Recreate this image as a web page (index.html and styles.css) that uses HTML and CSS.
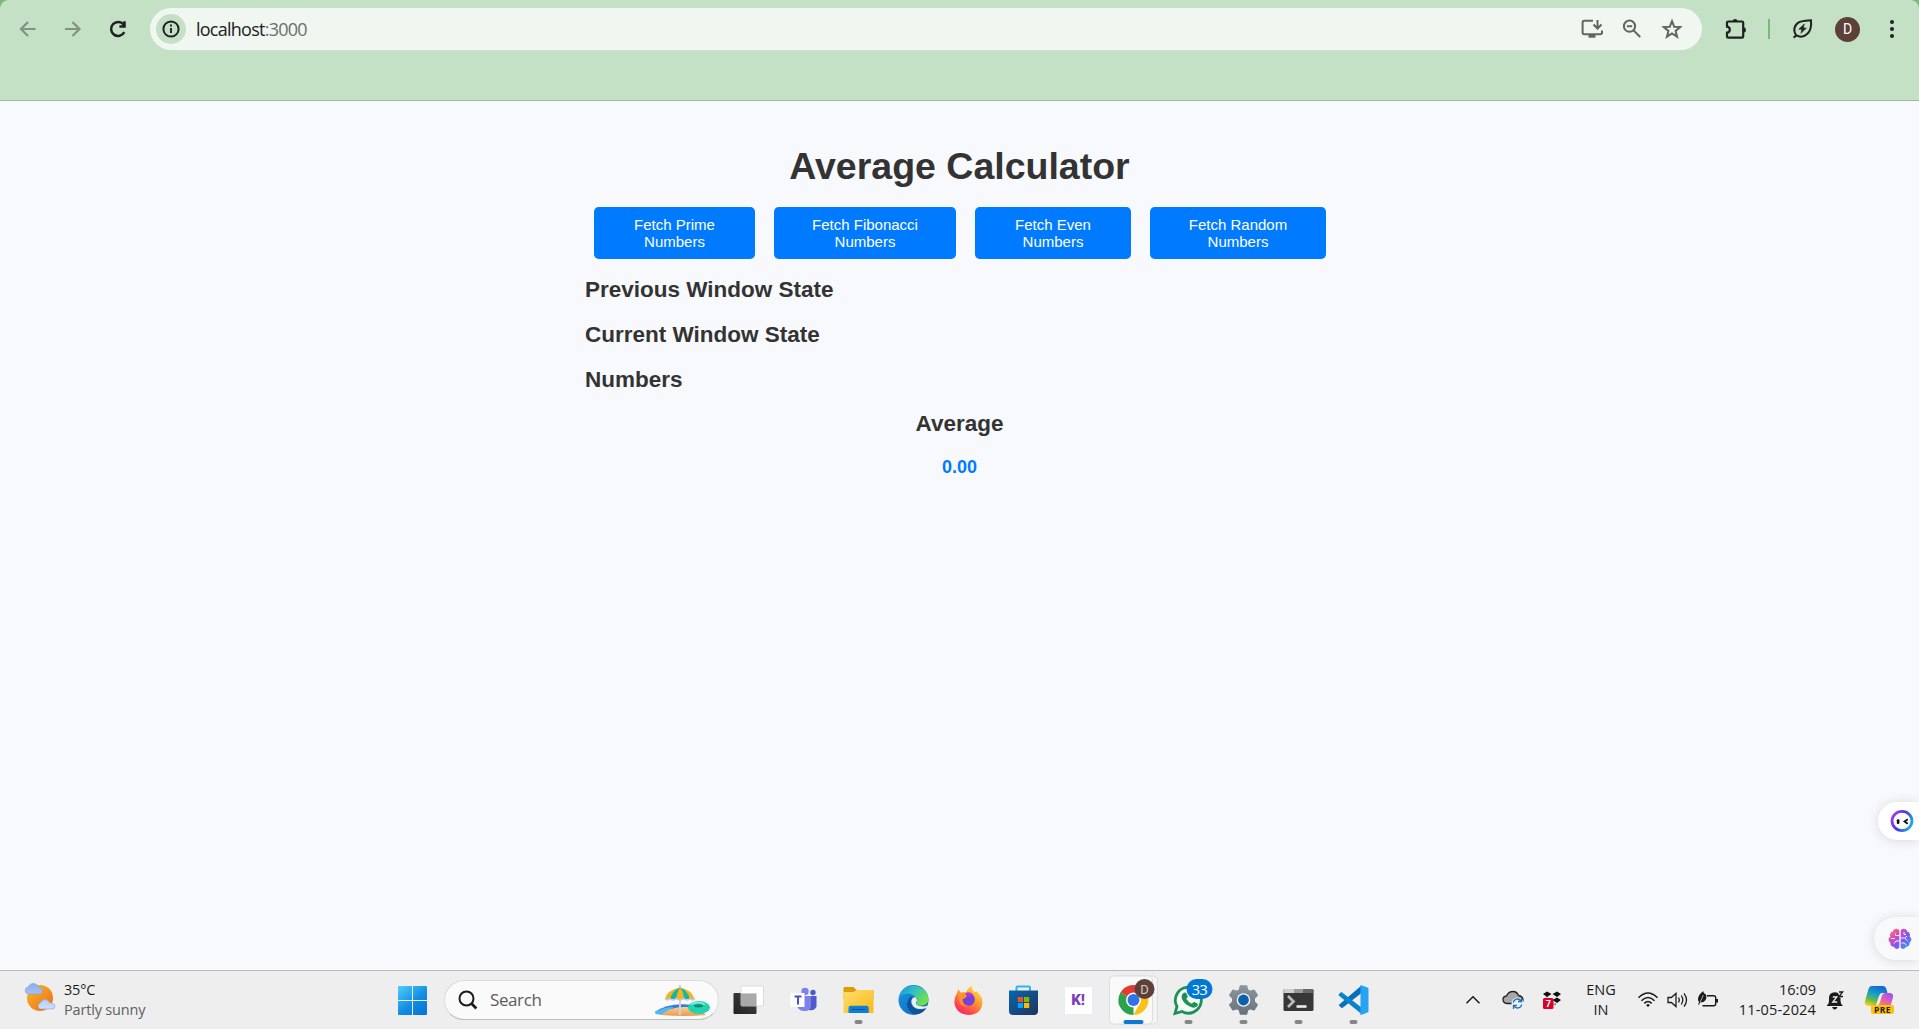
FILE: index.html
```html
<!DOCTYPE html>
<html lang="en">
<head>
<meta charset="utf-8">
<title>Average Calculator</title>
<link rel="stylesheet" href="styles.css">
</head>
<body>
<div class="screen">
  <header class="browser">
    <div class="toolbar">
      <svg class="nav-icon nav-dim" viewBox="0 0 24 24"><path d="M19.5 12H5M12 5l-7 7 7 7"/></svg>
      <svg class="nav-icon nav-dim" viewBox="0 0 24 24"><path d="M4 12H18.500M11.500 5l7 7-7 7"/></svg>
      <svg class="nav-icon nav-reload" viewBox="0 0 24 24"><path d="M18.3 15.2A7 7 0 1 1 17.6 7.6L19 9.3M18.500 4.3V9.400H13.4"/></svg>
      <div class="address">
        <span class="site-info"><svg width="20" height="20" viewBox="0 0 20 20"><circle cx="10" cy="10" r="7.6" fill="none" stroke="#202124" stroke-width="2"/><path d="M10 9v5M10 5.6v2" stroke="#202124" stroke-width="1.9"/></svg></span>
        <span class="url">localhost<span class="port">:3000</span></span>
        <div class="address-actions">
          <svg width="22" height="22" viewBox="0 0 22 22"><path d="M12 2.7H3.3Q1.6 2.7 1.6 4.4v10.2q0 1.7 1.7 1.7h16q1.7 0 1.7-1.7v-2.2" /><path d="M16.5 2v8M12.5 6.5l4 4 4-4"/><path d="M7.5 17v2.7h7V17z" class="solid"/></svg>
          <svg width="22" height="22" viewBox="0 0 22 22"><circle cx="8.5" cy="8.2" r="5.6"/><path d="M12.6 12.4l6.6 6.6M5.8 8.2h5.4"/></svg>
          <svg width="22" height="22" viewBox="0 0 22 22"><path d="M11 3.2l2.2 5.5 6 .4-4.6 3.8 1.5 5.8-5.1-3.2-5.1 3.2 1.5-5.8-4.6-3.8 6-.4z"/></svg>
        </div>
      </div>
      <svg class="ext" width="24" height="24" viewBox="0 0 24 24"><path d="M4.3 4.5h13.6q1.3 0 1.3 1.3v13.6q0 1.3-1.3 1.3H4.3Q3 20.700 3 19.400v-3.700q2.800-.400 2.800-3t-2.800-3V5.800Q3 4.500 4.300 4.500z" fill="none" stroke="#202124" stroke-width="2.200"/><path d="M8.600 4.500a2.500 2.500 0 0 1 5 0zM19.200 10.200a2.700 2.700 0 0 1 0 5.400z" fill="#202124"/></svg>
      <span class="separator"></span>
      <svg class="leaf" width="22" height="22" viewBox="0 0 22 22" fill="none" stroke="#202124" stroke-width="2"><path d="M4.300 17.400C.800 12.500 2 7 7.200 4.200 10.500 2.400 14.500 2.600 19 2.300c.500 5.500-.300 10.300-3.600 13.500-3.300 3.200-7.500 3.500-11.100 1.600zM4.800 17l-3.200 2.600"/><path d="M12.300 6L6.800 11.200h3.100L8.900 15.300l5.500-5.200h-3.100z" fill="#202124" stroke-width=".6"/></svg>
      <span class="profile">D</span>
      <svg class="kebab" width="6" height="20" viewBox="0 0 6 20" fill="#202124"><circle cx="3" cy="3" r="2"/><circle cx="3" cy="10" r="2"/><circle cx="3" cy="17" r="2"/></svg>
    </div>
  </header>

  <main class="page">
    <div class="calculator">
      <h1>Average Calculator</h1>
      <div class="buttons">
        <button class="btn-prime">Fetch Prime<br>Numbers</button>
        <button class="btn-fibo">Fetch Fibonacci<br>Numbers</button>
        <button class="btn-even">Fetch Even<br>Numbers</button>
        <button class="btn-random">Fetch Random<br>Numbers</button>
      </div>
      <h2>Previous Window State</h2>
      <h2>Current Window State</h2>
      <h2>Numbers</h2>
      <h2 class="average-title">Average</h2>
      <p class="average">0.00</p>
    </div>
    <div class="float float-bot">
      <svg width="24" height="24" viewBox="0 0 24 24"><defs><linearGradient id="ring" x1="0" y1=".3" x2="1" y2=".8"><stop offset="0" stop-color="#a03ce0"/><stop offset=".45" stop-color="#4a34e8"/><stop offset="1" stop-color="#18b8e4"/></linearGradient></defs><ellipse cx="12" cy="12" rx="10" ry="9.600" fill="#fff" stroke="url(#ring)" stroke-width="2.800"/><rect x="6.800" y="10.300" width="2.600" height="4.600" rx="1" fill="#111"/><path d="M17.800 10.300l-3.200 2.200 3.200 2.200" fill="none" stroke="#111" stroke-width="1.900"/></svg>
    </div>
    <div class="float float-brain">
      <svg width="24" height="22" viewBox="0 0 24 22"><defs><linearGradient id="brain" x1="0" y1="0" x2="1" y2="1"><stop offset="0" stop-color="#ff9a3c"/><stop offset=".3" stop-color="#e348b8"/><stop offset=".6" stop-color="#7c58f0"/><stop offset="1" stop-color="#28b4f8"/></linearGradient></defs><path d="M11.300 2.500C10 0 5.500 0 4.800 3.500 2 4 1.500 7 2.500 8.500 0 10 0 13 2.300 14.500 2 17.500 4 19 6 18.700 7.500 21.800 10.500 21.300 11.300 19.500zM12.700 2.500C14 0 18.500 0 19.200 3.500 22 4 22.500 7 21.500 8.500 24 10 24 13 21.700 14.500 22 17.500 20 19 18 18.700 16.500 21.800 13.500 21.300 12.700 19.500z" fill="url(#brain)"/><path d="M11.500 7.500H7.500V5.500M11.500 13H8l-2 2.500M3 10.500h4M13 10h4l2-2M13.500 15h3l1.500 2M16 4v2.500l2 0M17 10.500l2.500 2" fill="none" stroke="#fff" stroke-width=".9"/></svg>
    </div>
  </main>

  <footer class="taskbar">
    <div class="weather">
      <svg width="32" height="32" viewBox="0 0 32 32"><defs><linearGradient id="sun" x1="0" y1="0" x2="1" y2="1"><stop offset="0" stop-color="#f6b92d"/><stop offset="1" stop-color="#f06a12"/></linearGradient><linearGradient id="cloud" x1="0" y1="0" x2="0" y2="1"><stop offset="0" stop-color="#8aaeea"/><stop offset="1" stop-color="#cfdff8"/></linearGradient></defs><circle cx="16" cy="16" r="13" fill="url(#sun)"/><path d="M4 12a3.600 3.600 0 0 1 0-7Q6 1 10 1.500q3.500.500 4.300 3.500Q18 5 18.300 8.500 18.300 12 15 12zM16.500 27a3.200 3.200 0 0 1 0-6.200q1.500-3.600 5-3.200 3.200.300 4 3.200 5 .200 5.300 3.400 0 2.800-3 2.800z" fill="url(#cloud)" stroke="#86a8df" stroke-width=".7"/></svg>
      <div class="weather-text"><span>35°C</span><span class="muted">Partly sunny</span></div>
    </div>
    <svg class="start" width="29" height="29" viewBox="0 0 29 29"><defs><linearGradient id="win" gradientUnits="userSpaceOnUse" x1="0" y1="0" x2="24" y2="29"><stop offset="0" stop-color="#50cdfa"/><stop offset=".6" stop-color="#128ce2"/><stop offset="1" stop-color="#0677d6"/></linearGradient></defs><path d="M1 0h13v14H0V1Q0 0 1 0zM15 0h13q1 0 1 1v13H15zM0 15h14v14H1q-1 0-1-1zM15 15h14v13q0 1-1 1H15z" fill="url(#win)"/></svg>
    <div class="search">
      <svg width="20" height="20" viewBox="0 0 20 20" fill="none" stroke="#1b1b1b"><circle cx="8.500" cy="8.500" r="7" stroke-width="2"/><path d="M13.500 13.500l4.800 5" stroke-width="2.600"/></svg>
      <span>Search</span>
      <svg class="beach" width="56" height="33" viewBox="0 0 56 33"><defs><linearGradient id="sand" x1="0" y1="0" x2="0" y2="1"><stop offset="0" stop-color="#fbd18c"/><stop offset="1" stop-color="#e99a50"/></linearGradient></defs><path d="M1 28Q15 18 38 21v4L8 30 2 30z" fill="#2c7fe0"/><path d="M1 28Q10 23 20 23L8 31 2 30z" fill="#52b8f0"/><path d="M7 31Q17 22 33 23q14 2 19 8-22 2-45 0z" fill="url(#sand)"/><path d="M25 1h2v30h-2z" fill="#d9cbe0"/><path d="M11 15Q13 6 26 3.500 38 6 40.500 15z" fill="#f0b51f"/><path d="M16 15Q18 7 26 3.500 23 8 22 15zM30 15Q29.500 7 26 3.500 34 7 36 15z" fill="#14b8a0"/><path d="M11 14.500q2.500 3 5 0 3 3 6 0 4 3 8 0 3 3 6 0 2.500 3 5 0" fill="none" stroke="#c9c0e8" stroke-width="1.500"/><ellipse cx="45" cy="23.500" rx="11" ry="6.500" fill="#22d3ae"/><ellipse cx="44.500" cy="21.800" rx="4.500" ry="1.600" fill="#128a78"/><path d="M37 20.500q7-4 14 0" stroke="#86f2dc" stroke-width="1.400" fill="none"/></svg>
    </div>
    <nav class="apps">
      <svg class="app" viewBox="0 0 55 58"><defs><linearGradient id="tv" x1="0" y1="1" x2="1" y2="0"><stop offset="0" stop-color="#222"/><stop offset="1" stop-color="#444"/></linearGradient></defs><rect x="12.500" y="22" width="23" height="21" rx="1" fill="url(#tv)"/><rect x="20" y="15" width="22.500" height="20" rx="1" fill="#fff" fill-opacity=".92" stroke="#d4d4d4" stroke-width=".8"/><path d="M20 22.500h15.500V35H20z" fill="#a9a9a9"/></svg>
      <svg class="app" viewBox="0 0 55 58"><circle cx="29" cy="20.500" r="3.700" fill="#7b83eb"/><circle cx="37" cy="21.500" r="2.700" fill="#5059c9"/><path d="M33 25h7.500v10.500Q39 40 33 39z" fill="#5059c9"/><path d="M21 25h14v9q0 6-6.500 6T21 34z" fill="#7b83eb"/><rect x="14.500" y="22" width="14" height="14" fill="#fff"/><path d="M18.500 25.500h7M22 25.500V33.500" stroke="#4b53bc" stroke-width="2"/></svg>
      <svg class="app" viewBox="0 0 55 58"><defs><linearGradient id="folder" x1="0" y1="0" x2="1" y2="1"><stop offset="0" stop-color="#ffdd70"/><stop offset="1" stop-color="#f9bb16"/></linearGradient></defs><path d="M12.500 17q0-1 1-1h9l3 3H42q.500 0 .500 1v8h-30z" fill="#dd9d05"/><path d="M12.500 21h10l3-2H41q1.500 0 1.500 1v22h-30z" fill="url(#folder)"/><path d="M17.500 42v-5q0-2.200 2.200-2.200H35.500q2.200 0 2.200 2.200v5z" fill="#0d7fd5"/><path d="M21 38.500h13" stroke="#0a4f92" stroke-width="1"/><rect class="run-dot" x="23.500" y="49" width="8" height="4" rx="2"/></svg>
      <svg class="app" viewBox="0 0 55 58"><defs><linearGradient id="edge1" x1="0" y1="0" x2="1" y2=".5"><stop offset="0" stop-color="#1594d8"/><stop offset=".5" stop-color="#30bfc7"/><stop offset="1" stop-color="#70e04a"/></linearGradient><linearGradient id="edge2" x1="0" y1="0" x2="1" y2="1"><stop offset="0" stop-color="#1598e6"/><stop offset="1" stop-color="#0f62b5"/></linearGradient></defs><circle cx="27.500" cy="29" r="15" fill="url(#edge2)"/><path d="M12.700 27.500A15 15 0 0 1 42.500 28.500Q42 34.500 35 34.500 30 34.500 30 32.500 31.500 31 31 28 29 23.500 22.500 22.500 16 22.500 12.700 27.500z" fill="url(#edge1)"/><path d="M24.500 25.500Q18.500 33 23 39q4 5.500 10 3.800Q38 41 40.200 37.300 32 41 27 36q-4-5-.500-9z" fill="#10519b"/><path d="M29.500 26q-5 1-4 6 2 6 9 6 3.500 0 6.500-1.500l1-2q-4 1.500-8 .5-5-1-4-3.500 2-2-.5-5.500z" fill="#eee"/></svg>
      <svg class="app" viewBox="0 0 55 58"><defs><linearGradient id="fox" x1=".8" y1="0" x2=".2" y2="1"><stop offset="0" stop-color="#ffe840"/><stop offset=".45" stop-color="#ff9530"/><stop offset=".8" stop-color="#ff4050"/><stop offset="1" stop-color="#e52286"/></linearGradient></defs><path d="M31 14.500Q30 17 33 20.500q2 1.500 2-.5 6.500 4.500 6.500 11.500-1 12-14 12.500-13-1-14.200-13 .2-5.500 3.200-10l.500-3 3 4q3-1.500 5-.5 2-5 6-7z" fill="url(#fox)"/><circle cx="27.500" cy="28.500" r="6.300" fill="#7542d8"/><path d="M18 22q5-1 8 2.500-1 3-4.500 3.500 0 6 6 7-7 1-9.500-4.500z" fill="#ff9228"/><path d="M24 22.500q5-3 8.500 1.500-3-.5-4 2z" fill="#b833dc"/></svg>
      <svg class="app" viewBox="0 0 55 58"><defs><linearGradient id="store" x1="0" y1="0" x2="1" y2="1"><stop offset="0" stop-color="#0866b2"/><stop offset="1" stop-color="#203459"/></linearGradient></defs><path d="M20.500 21v-4.500q0-1 1-1h11.500q1 0 1 1V21" fill="none" stroke="#28b8ef" stroke-width="2"/><path d="M13 19.500h29V40q0 4-4 4H17q-4 0-4-4z" fill="url(#store)"/><path d="M21.800 26h5.200v5h-5.200z" fill="#f25022"/><path d="M28 26h5.200v5H28z" fill="#7fba00"/><path d="M21.800 32h5.200v5h-5.200z" fill="#00a4ef"/><path d="M28 32h5.200v5H28z" fill="#ffb900"/></svg>
      <div class="app kahoot"><span>K!</span></div>
      <svg class="app" viewBox="0 0 55 58"><rect x="7" y="5" width="44.500" height="48" rx="4" fill="#f4f4f4" stroke="#dedede"/><rect x="3.500" y="5" width="43" height="48" rx="4" fill="#f9f9f9" stroke="#dedede"/><path d="M27.500 29L14.500 21.500A15 15 0 0 1 40.500 21.500z" fill="#e33b2e"/><path d="M27.500 29V44A15 15 0 0 1 14.500 21.500z" fill="#2da14b"/><path d="M27.500 22H40.700A15 15 0 0 1 27.500 44L33.600 32.500z" fill="#fbc116"/><path d="M14.500 21.500l7 11 6 3.500-3 7.500q-8-2-12-11z" fill="#2da14b"/><circle cx="27.500" cy="29" r="7.500" fill="#fff"/><circle cx="27.500" cy="29" r="6" fill="#2f73e8"/><circle cx="38.500" cy="18" r="10" fill="#5d4037"/><text x="38.500" y="22.800" class="chrome-letter">D</text><rect x="17.500" y="49" width="20" height="4" rx="2" fill="#0b78d4"/></svg>
      <svg class="app" viewBox="0 0 55 58"><path d="M14 42.500l2-7A13 13 0 1 1 21 40.500z" fill="#f5faf6" stroke="#1c9153" stroke-width="2.800"/><path d="M22 22.500q2-2 3.500 0l1.300 3q0 1-1.500 2.300 2 3.700 5.500 5 1.700-2.200 2.700-1.800l3 1.500q1.200 1-.5 3-2.500 2-6 .5-6.500-2.500-9-8-1.200-3.500 1-5.500z" fill="#1c9153"/><rect x="25.500" y="8" width="26" height="20" rx="10" fill="#0078d4"/><text x="38.500" y="23.500" class="badge-text">33</text><rect class="run-dot" x="23.500" y="49" width="8" height="4" rx="2"/></svg>
      <svg class="app" viewBox="0 0 55 58"><defs><linearGradient id="gear" x1="0" y1="0" x2="0" y2="1"><stop offset="0" stop-color="#8c949c"/><stop offset="1" stop-color="#69737d"/></linearGradient></defs><path d="M24.500 15h6l1 4 2.500 1.400 4-1.200 3.200 5-3 3v3.600l3 3-3.200 5-4-1.200-2.500 1.400-1 4h-6l-1-4-2.500-1.400-4 1.200-3.200-5 3-3v-3.600l-3-3 3.200-5 4 1.200 2.500-1.400z" fill="url(#gear)" stroke="url(#gear)" stroke-width="1.500" stroke-linejoin="round"/><circle cx="27.500" cy="29" r="6.800" fill="#f4f4f4"/><circle cx="27.500" cy="29" r="5.400" fill="#0c60ae"/><rect class="run-dot" x="23.500" y="49" width="8" height="4" rx="2"/></svg>
      <svg class="app" viewBox="0 0 55 58"><rect x="12.500" y="18" width="30" height="22" rx="1.500" fill="#373737"/><path d="M12.500 22v-2.500q0-1.500 1.500-1.500h9v4z" fill="#cfcfcf"/><path d="M23 18h9v4h-9z" fill="#9b9b9b"/><path d="M32 18h9q1.500 0 1.500 1.500V22H32z" fill="#686868"/><path d="M17 25l5.500 5.500L17 36" fill="none" stroke="#bcbcbc" stroke-width="2.700"/><path d="M25.500 35.500h10" stroke="#eee" stroke-width="2.600"/><rect class="run-dot" x="23.500" y="49" width="8" height="4" rx="2"/></svg>
      <svg class="app" viewBox="0 0 55 58"><path d="M14 35.500l2 1.700L35.500 22v-7.500L12.700 34z" fill="#0870bb"/><path d="M12.700 24.500Q12.300 23 14 22l1.500-1 20 15.500V43z" fill="#0b83cc"/><path d="M34.500 14l7 2.500q1 .500 1 1.500v22q0 1-1 1.500l-7 2.800z" fill="#27a3f2"/><rect class="run-dot" x="23.500" y="49" width="8" height="4" rx="2"/></svg>
    </nav>
    <div class="tray">
      <svg class="chevron" width="16" height="12" viewBox="0 0 16 12"><path d="M1.500 9.200L8 2.700l6.500 6.500" fill="none" stroke="#1b1b1b" stroke-width="1.500"/></svg>
      <svg class="onedrive" width="22" height="20" viewBox="0 0 22 20"><path d="M5 13.500Q1 13 1 9.500 1 6.500 4.500 6 6.500 1.500 11 1.500q4 0 5.500 4 4 .5 4.500 4 0 4-4 4z" fill="#a8a8a8" stroke="#222" stroke-width="1.300"/><circle cx="15.500" cy="13.500" r="6" fill="#eee"/><path d="M11.300 12.500a4.200 4.200 0 0 1 7.700-1.500M19.700 14.500A4.200 4.200 0 0 1 12 16M19.500 8v3.500H16M11.500 19v-3.500H15" fill="none" stroke="#1673c4" stroke-width="1.300"/></svg>
      <svg class="dropbox" width="20" height="20" viewBox="0 0 20 20"><path d="M1 4l4-2.500L9.500 4 5 7zM10.500 4L15 1.500 19 4l-4 3zM10.500 10L15 7.500 19 10l-4 3zM1 10l4-2.500L9.500 10 5 13z" fill="#111"/><path d="M10.500 14l3.500-1v2.500z" fill="#888"/><rect x="1" y="8" width="10.500" height="11" rx="1.500" fill="#d6042d"/><text x="6.300" y="16.700" class="tray-badge">7</text></svg>
      <div class="lang"><span>ENG</span><span>IN</span></div>
      <svg class="wifi" width="22" height="18" viewBox="0 0 22 18" fill="none" stroke="#1b1b1b" stroke-width="1.500"><path d="M1.500 6.800q9.500-9.600 19 0M4.400 9.800q6.600-6.700 13.200 0M7.300 12.400q3.700-3.700 7.400 0"/><circle cx="11" cy="14.300" r="1.400" fill="#1b1b1b" stroke="none"/></svg>
      <svg class="volume" width="22" height="18" viewBox="0 0 22 18" fill="none" stroke="#1b1b1b" stroke-width="1.300"><path d="M1 6.500h3.300L9 2.500v13L4.300 11.500H1z"/><path d="M11.500 6.500q1.500 2.500 0 5M14.300 4.500q3 4.500 0 9M17 2.300q5 6.700 0 13.400"/></svg>
      <svg class="battery" width="22" height="18" viewBox="0 0 22 18"><path d="M10 4.700h6.700q2 0 2 2v6q0 2-2 2H5.500" fill="none" stroke="#1b1b1b" stroke-width="1.400"/><path d="M19 8h2v3.500h-2z" fill="#1b1b1b"/><path d="M1 8Q1.500 3 6.500 0 6 2 9 3.500q1.500 5-2.500 7.500L3 11.500 2 14 1.200 13.500 2 11Q.800 10 1 8z" fill="#1b1b1b"/><path d="M3 11q2-3 3.200-7" stroke="#eee" stroke-width=".7" fill="none"/></svg>
      <div class="clock"><span>16:09</span><span class="date">11-05-2024</span></div>
      <svg class="bell" width="18" height="22" viewBox="0 0 18 22"><path d="M1 16q2-1 2-4V9q0-5.500 6-5.700 5.500.2 5.500 5.700v3q0 3 2 4v1H1z" fill="#1b1b1b"/><path d="M6 18h5.500q-1 2.500-2.750 2.500T6 18z" fill="#1b1b1b"/><path d="M11.500 1h6v7.500h-4z" fill="#eee"/><path d="M13 3h3.600l-3.600 4.500h4" stroke="#1b1b1b" stroke-width="1.300" fill="none"/><path d="M6.800 8h4l-4 5h4.400" stroke="#eee" stroke-width="1.300" fill="none"/></svg>
      <svg class="copilot" width="32" height="30" viewBox="0 0 32 30"><defs><linearGradient id="cp1" x1=".6" y1="0" x2=".2" y2="1"><stop offset="0" stop-color="#1268d6"/><stop offset=".4" stop-color="#16a0c4"/><stop offset=".7" stop-color="#62bb4c"/><stop offset="1" stop-color="#ffcf18"/></linearGradient><linearGradient id="cp2" x1=".9" y1="0" x2=".2" y2="1"><stop offset="0" stop-color="#9354ec"/><stop offset=".5" stop-color="#dc5bc0"/><stop offset="1" stop-color="#ff8a3c"/></linearGradient></defs><path d="M8 1h11q2.500 0 3.200 2.500L23.500 8H18q-2 0-3 3L12 20q-.5 1-2 1H4q-4-.5-3-5L4.500 4Q5.500 1 8 1z" fill="url(#cp1)"/><path d="M21 8h5q4 .5 3 4.500L26.500 21H13q2-.5 3-4l2-6.500Q19 8 21 8z" fill="url(#cp2)"/><rect x="7" y="20" width="23" height="9" rx="2" fill="#ffc20a"/><text x="18.500" y="27.500" class="pre-text">PRE</text></svg>
    </div>
  </footer>
</div>
</body>
</html>
```
FILE: styles.css
```css
* { box-sizing: border-box; }

body {
  margin: 0;
  font-family: "Liberation Sans", Arial, sans-serif;
  color: #333;
}

svg { flex: none; display: block; }

.screen {
  display: flex;
  flex-direction: column;
  height: 1029px;
  overflow: hidden;
}

/* Browser toolbar */
.browser {
  flex: none;
  height: 101px;
  padding-top: 8px;
  background: #c5e1c5;
  border-bottom: 1px solid #9cbb9c;
  position: relative;
}

.browser::before {
  content: "";
  position: absolute;
  inset: 0;
  background:
    radial-gradient(circle at 9px 9px, transparent 8.5px, #77bb79 9.5px) 0 0 / 9px 9px no-repeat,
    radial-gradient(circle at 0 9px, transparent 8.5px, #77bb79 9.5px) 100% 0 / 9px 9px no-repeat;
}

.toolbar {
  display: flex;
  align-items: center;
  height: 42px;
  padding-left: 16px;
}

.nav-icon {
  width: 24px;
  height: 24px;
  fill: none;
  stroke: #202124;
  stroke-width: 2.5;
  margin-right: 21px;
}

.nav-dim { stroke: #809480; stroke-width: 2.2; }
.nav-reload { margin: 0 20px 0 0; }

.address {
  display: flex;
  align-items: center;
  width: 1552px;
  height: 42px;
  padding: 0 19px 0 6px;
  border-radius: 21px;
  background: #f0f7f0;
}

.site-info {
  display: flex;
  align-items: center;
  justify-content: center;
  width: 30px;
  height: 30px;
  border-radius: 50%;
  background: #c5e1c5;
}

.url {
  margin-left: 10px;
  font: 18px/24px "Open Sans", "Noto Sans", sans-serif;
  letter-spacing: -0.75px;
  color: #202124;
}

.port { color: #6b706b; }

.address-actions {
  display: flex;
  gap: 18px;
  margin-left: auto;
  fill: none;
  stroke: #5f6661;
  stroke-width: 2;
}

.address-actions .solid { fill: #5f6661; stroke: none; }

.ext { margin-left: 22px; }

.separator {
  width: 2px;
  height: 20px;
  margin-left: 20px;
  background: #77bb79;
}

.leaf { margin-left: 22px; }

.profile {
  width: 25px;
  height: 25px;
  margin-left: 21px;
  border-radius: 50%;
  background: #5d4037;
  color: #fff;
  font: 14px/25px Roboto, sans-serif;
  text-align: center;
}

.kebab { margin-left: 29px; }

/* Calculator page */
.page {
  flex: 1;
  position: relative;
  background: #f8f9fc;
}

.calculator {
  width: 749px;
  margin: 0 auto;
  padding-top: 44px;
}

h1 {
  margin: 0;
  font-size: 37.5px;
  line-height: 43px;
  text-align: center;
}

.buttons {
  display: flex;
  gap: 19px;
  margin: 19px 8px 18px 9px;
}

button {
  height: 52px;
  padding: 0;
  border: 0;
  border-radius: 4.7px;
  background: #007bff;
  color: #fff;
  font: 15px/17px "Liberation Sans", Arial, sans-serif;
}

.btn-prime { flex: 161 1 0; }
.btn-fibo { flex: 182 1 0; }
.btn-even { flex: 156 1 0; }
.btn-random { flex: 176 1 0; }

h2 {
  margin: 0 0 19px;
  font-size: 22.5px;
  line-height: 26px;
}

.average-title { margin-top: -1px; margin-bottom: 20px; text-align: center; }

.average {
  margin: 0;
  font-size: 18px;
  line-height: 21px;
  font-weight: bold;
  text-align: center;
  color: #007bff;
}

/* Floating side widgets */
.float {
  position: absolute;
  right: 0;
  display: flex;
  align-items: center;
  border-radius: 22px 0 0 22px;
  box-shadow: 0 1px 12px rgba(0, 0, 0, .13);
}

.float-bot {
  top: 701px;
  width: 41px;
  height: 38px;
  padding-left: 11.5px;
  background: #fff;
}

.float-brain {
  top: 816px;
  width: 45px;
  height: 43px;
  padding-left: 13.5px;
  background: #f8f9fa;
}

/* Taskbar */
.taskbar {
  flex: none;
  display: flex;
  align-items: center;
  height: 59px;
  border-top: 1px solid #b9babd;
  background: #eee;
  color: #1b1b1b;
  font: 14.5px/20px "Open Sans", "Noto Sans", sans-serif;
}

.weather {
  display: flex;
  align-items: center;
  width: 398px;
  padding-left: 24px;
  gap: 8px;
}

.weather svg { margin-bottom: 4px; }
.weather-text { display: flex; flex-direction: column; letter-spacing: -0.18px; }
.muted { color: #606060; }

.start { margin-top: 1px; }

.search {
  display: flex;
  align-items: center;
  width: 275px;
  height: 40px;
  margin: 0 2px 0 17px;
  padding: 0 8px 0 13px;
  border: 1px solid #dcdcdc;
  border-bottom-color: #bcbcbc;
  border-radius: 20px;
  background: #fafafa;
  color: #5c5c5c;
  font-size: 17px;
  letter-spacing: -0.4px;
}

.search span { margin-left: 12px; }
.beach { margin-left: auto; }

.apps { display: flex; margin-left: -0.5px; }
.app { flex: none; width: 55px; height: 58px; }
.run-dot { fill: #868686; }

.kahoot {
  display: flex;
  align-items: center;
  justify-content: center;
}

.kahoot span {
  width: 29px;
  height: 29px;
  border: 1px solid #e7ecf8;
  background: #fff;
  color: #7c3fbe;
  font: 900 15px/27px Roboto, sans-serif;
  text-align: center;
}

.chrome-letter {
  font: 13px Roboto, sans-serif;
  fill: #d5c9c4;
  text-anchor: middle;
}

.badge-text {
  font: 14.5px "Open Sans", sans-serif;
  letter-spacing: -0.5px;
  fill: #fff;
  text-anchor: middle;
}

.tray {
  display: flex;
  align-items: center;
  margin-left: 84.5px;
}

.onedrive { margin-left: 21px; }
.dropbox { margin-left: 18px; }

.lang {
  display: flex;
  flex-direction: column;
  align-items: center;
  width: 40px;
  margin-left: 19px;
}

.wifi { margin-left: 16px; }
.volume { margin-left: 8px; }
.battery { margin-left: 8px; }

.clock {
  display: flex;
  flex-direction: column;
  align-items: flex-end;
  width: 97px;
}

.date { letter-spacing: 0.15px; }

.bell { margin-left: 10px; }
.copilot { margin-left: 20px; }

.tray-badge {
  font: bold 9px Roboto, sans-serif;
  fill: #fff;
  text-anchor: middle;
}

.pre-text {
  font: bold 8.5px "Open Sans", sans-serif;
  letter-spacing: .4px;
  fill: #222;
  text-anchor: middle;
}
```
